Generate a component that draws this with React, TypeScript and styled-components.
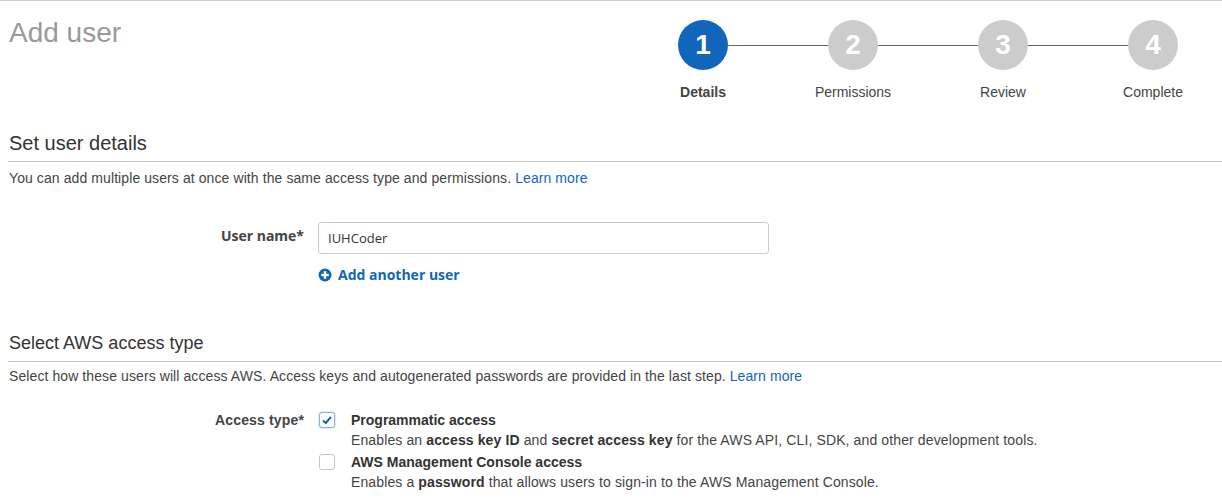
import React from "react";
import styled, { createGlobalStyle } from "styled-components";

const GlobalStyle = createGlobalStyle`
  html, body { margin: 0; padding: 0; background: #fff; }
  body {
    font-family: "Liberation Sans", Arial, sans-serif;
    font-size: 14px;
    color: #444;
  }
  * { box-sizing: border-box; }
`;

const Page = styled.div`
  border-top: 1px solid #ccc;
  padding-left: 8px;
  width: 1222px;
  height: 502px;
  overflow: hidden;
`;

const Header = styled.div`
  display: flex;
  justify-content: space-between;
  align-items: flex-start;
  padding-right: 19px;
  height: 99px;
`;

const Title = styled.h1`
  margin: 16px 0 0 1px;
  font-size: 28px;
  line-height: 32px;
  font-weight: normal;
  color: #999;
`;

const Stepper = styled.ol`
  list-style: none;
  margin: 19px 0 0;
  padding: 0;
  display: grid;
  grid-template-columns: repeat(4, 100px);
  column-gap: 50px;
`;

const Step = styled.li<{ $last?: boolean }>`
  position: relative;
  display: flex;
  flex-direction: column;
  align-items: center;
  &::after {
    content: "";
    display: ${(p) => (p.$last ? "none" : "block")};
    position: absolute;
    top: 25px;
    left: 75px;
    width: 100px;
    height: 1px;
    background: #666;
  }
`;

const Circle = styled.div<{ $active?: boolean }>`
  width: 50px;
  height: 50px;
  border-radius: 50%;
  background: ${(p) => (p.$active ? "#1166bb" : "#cccccc")};
  color: #fff;
  font-weight: bold;
  font-size: 28px;
  display: flex;
  align-items: center;
  justify-content: center;
`;

const StepLabel = styled.div<{ $active?: boolean }>`
  margin-top: 14px;
  line-height: 16px;
  font-size: 14px;
  color: #444;
  font-weight: ${(p) => (p.$active ? "bold" : "normal")};
  white-space: nowrap;
`;

const SectionHeading = styled.h2<{ $top: number; $size: number }>`
  margin: ${(p) => p.$top}px 0 0;
  padding: 0 0 6px 1px;
  font-size: ${(p) => p.$size}px;
  line-height: 24px;
  font-weight: normal;
  color: #333;
  border-bottom: 1px solid #ccc;
`;

const Intro = styled.p<{ $top: number }>`
  margin: ${(p) => p.$top}px 0 0 1px;
  line-height: 20px;
  font-size: 14px;
  letter-spacing: 0.09px;
  color: #444;
`;

const Link = styled.a`
  color: #1166bb;
  text-decoration: none;
`;

const FormRow = styled.div<{ $top: number }>`
  display: grid;
  grid-template-columns: 296px auto;
  column-gap: 14px;
  margin-top: ${(p) => p.$top}px;
  align-items: start;
`;

const Label = styled.label<{ $sans?: boolean }>`
  text-align: right;
  font-weight: bold;
  color: #444;
  font-family: ${(p) =>
    p.$sans ? `"Open Sans", "Noto Sans", sans-serif` : `"Liberation Sans", Arial, sans-serif`};
  font-size: 14px;
  line-height: 20px;
  letter-spacing: ${(p) => (p.$sans ? "0" : "0.15px")};
`;

const InputLabel = styled(Label)`
  padding-top: 4px;
`;

const TextInput = styled.input`
  display: block;
  width: 451px;
  height: 32px;
  border: 1px solid #ccc;
  border-radius: 3px;
  padding: 0 9px;
  font-family: "Open Sans", "Noto Sans", sans-serif;
  font-size: 13px;
  color: #333;
  outline: none;
`;

const AddLink = styled.a`
  display: inline-flex;
  align-items: center;
  gap: 6px;
  margin-top: 11px;
  color: #1166bb;
  font-family: "Open Sans", "Noto Sans", sans-serif;
  font-weight: bold;
  font-size: 14px;
  line-height: 20px;
  text-decoration: none;
`;

const Options = styled.div`
  display: flex;
  flex-direction: column;
  gap: 2px;
`;

const Option = styled.div`
  display: grid;
  grid-template-columns: 17px auto;
  column-gap: 15px;
  margin-left: 1px;
`;

const Box = styled.span<{ $checked?: boolean }>`
  width: 16px;
  height: 16px;
  margin-top: 2px;
  border-radius: 3px;
  border: 1px solid ${(p) => (p.$checked ? "#8fb0d6" : "#c6c6c6")};
  box-shadow: ${(p) => (p.$checked ? "0 0 2px rgba(17,102,187,0.45)" : "none")};
  background: #fff;
  display: flex;
  align-items: center;
  justify-content: center;
`;

const OptionTitle = styled.div`
  font-weight: bold;
  color: #333;
  line-height: 20px;
  white-space: nowrap;
`;

const OptionDesc = styled.div`
  color: #444;
  line-height: 20px;
  letter-spacing: 0.12px;
  white-space: nowrap;
  b { color: #333; }
`;

const steps = ["Details", "Permissions", "Review", "Complete"];

const PlusIcon = () => (
  <svg width="14" height="14" viewBox="0 0 14 14">
    <circle cx="7" cy="7" r="6.5" fill="#1166bb" />
    <rect x="3.2" y="5.8" width="7.6" height="2.4" fill="#fff" />
    <rect x="5.8" y="3.2" width="2.4" height="7.6" fill="#fff" />
  </svg>
);

const Check = () => (
  <svg width="12" height="12" viewBox="0 0 12 12">
    <path d="M2 6.5 L4.8 9 L10 2.8" fill="none" stroke="#1166bb" strokeWidth="2" />
  </svg>
);

export default function App() {
  return (
    <>
      <GlobalStyle />
      <Page>
        <Header>
          <Title>Add user</Title>
          <Stepper>
            {steps.map((s, i) => (
              <Step key={s} $last={i === steps.length - 1}>
                <Circle $active={i === 0}>{i + 1}</Circle>
                <StepLabel $active={i === 0}>{s}</StepLabel>
              </Step>
            ))}
          </Stepper>
        </Header>

        <SectionHeading $top={31} $size={20}>
          Set user details
        </SectionHeading>
        <Intro $top={6}>
          You can add multiple users at once with the same access type and permissions.{" "}
          <Link href="#">Learn more</Link>
        </Intro>

        <FormRow $top={34}>
          <InputLabel $sans>User name*</InputLabel>
          <div>
            <TextInput defaultValue="IUHCoder" />
            <AddLink href="#">
              <PlusIcon />
              Add another user
            </AddLink>
          </div>
        </FormRow>

        <SectionHeading $top={46} $size={18}>
          Select AWS access type
        </SectionHeading>
        <Intro $top={4}>
          Select how these users will access AWS. Access keys and autogenerated passwords are
          provided in the last step. <Link href="#">Learn more</Link>
        </Intro>

        <FormRow $top={24}>
          <Label>Access type*</Label>
          <Options>
            <Option>
              <Box $checked>
                <Check />
              </Box>
              <div>
                <OptionTitle>Programmatic access</OptionTitle>
                <OptionDesc>
                  Enables an <b>access key ID</b> and <b>secret access key</b> for the AWS API,
                  CLI, SDK, and other development tools.
                </OptionDesc>
              </div>
            </Option>
            <Option>
              <Box />
              <div>
                <OptionTitle>AWS Management Console access</OptionTitle>
                <OptionDesc>
                  Enables a <b>password</b> that allows users to sign-in to the AWS Management
                  Console.
                </OptionDesc>
              </div>
            </Option>
          </Options>
        </FormRow>
      </Page>
    </>
  );
}
